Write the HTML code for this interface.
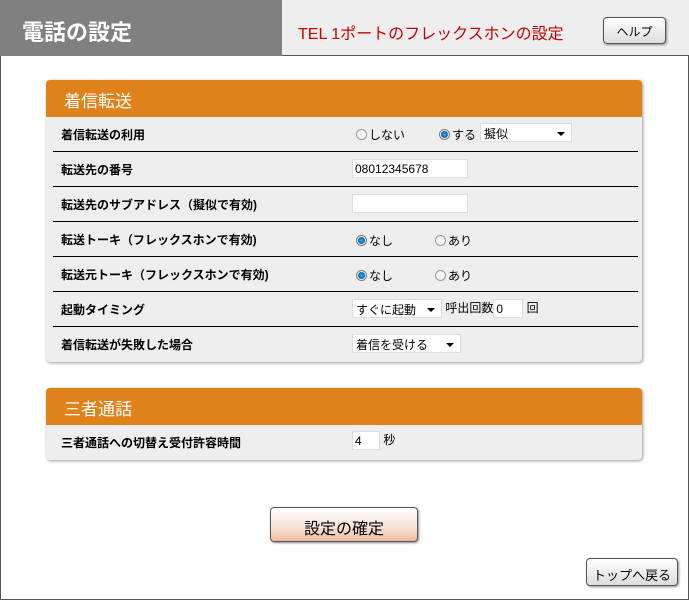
<!DOCTYPE html>
<html><head><meta charset="utf-8"><style>
*{margin:0;padding:0;box-sizing:border-box}
body{width:689px;height:601px;background:#fff;font-family:"Liberation Sans","Noto Sans CJK JP",sans-serif;position:relative;overflow:hidden;font-size:12px;color:#000}
.frame{position:absolute;left:0;top:0;width:689px;height:600px;border:1px solid #555;border-top:none}
.hd{position:absolute;left:0;top:0;width:689px;height:56px;background:#eeeeee;border-bottom:1px solid #555}
.hd .t{position:absolute;left:0;top:0;width:282px;height:56px;background:#808080;color:#fff;font-size:22px;font-weight:bold;padding:15px 0 0 22px}
.hd .s{position:absolute;left:298px;top:20px;color:#c00;font-size:16px}
.btn{position:absolute;border:1px solid #555;border-radius:4px;background:linear-gradient(#fff,#ddd);box-shadow:1px 1px 2px #888;text-align:center;color:#000}
.panel{position:absolute;left:46px;width:596px;background:#eeeeee;border-radius:4px;box-shadow:1px 1px 3px #999;overflow:hidden}
.ph{height:37px;background:#e0821a;color:#fff;font-size:17px;padding:7px 0 0 18px}
.row{position:relative;height:35px;margin:0 4px 0 7px;border-bottom:1px solid #000}
.row.last{border-bottom:none}
.lb{position:absolute;left:8px;top:9px;font-weight:bold;font-size:12px}
.ct{position:absolute;left:299px;top:8px;font-size:12px;white-space:nowrap}
.ab{position:absolute;white-space:nowrap;font-size:12px}
.rd{display:inline-block;width:11px;height:11px;border-radius:50%;border:1px solid #999;background:#f4f4f4;vertical-align:-1px;margin-right:2px}
.rd.on{background:radial-gradient(#4af 0,#06a 3px,#fff 4px);border-color:#777}
.in{display:inline-block;background:#fff;border:1px solid #ddd;height:19px;vertical-align:middle;font-size:12px;padding:2px 2px}
.sel{display:inline-block;background:#fff;border:1px solid #ddd;height:19px;vertical-align:middle;padding:1px 3px;position:relative}
.sel:after{content:"";position:absolute;right:6px;top:8px;border:4px solid transparent;border-top:4px solid #000}
</style></head><body>
<div class="frame"></div>
<div class="hd"><div class="t">電話の設定</div><div class="s">TEL 1ポートのフレックスホンの設定</div>
<div class="btn" style="left:603px;top:17px;width:63px;height:27px;padding-top:5px;font-size:12px">ヘルプ</div></div>

<div class="panel" style="top:80px;height:282px">
<div class="ph">着信転送</div>
<div class="row"><div class="lb">着信転送の利用</div>
<div class="ab" style="left:303px;top:9px"><span class="rd"></span>しない</div>
<div class="ab" style="left:386px;top:9px"><span class="rd on"></span>する</div>
<div class="ab" style="left:427px;top:6px"><span class="sel" style="width:92px">擬似</span></div></div>
<div class="row"><div class="lb">転送先の番号</div><div class="ct" style="top:7px"><span class="in" style="width:116px">08012345678</span></div></div>
<div class="row"><div class="lb">転送先のサブアドレス（擬似で有効)</div><div class="ct" style="top:7px"><span class="in" style="width:116px"></span></div></div>
<div class="row"><div class="lb">転送トーキ（フレックスホンで有効)</div><div class="ab" style="left:303px;top:10px"><span class="rd on"></span>なし</div><div class="ab" style="left:382px;top:10px"><span class="rd"></span>あり</div></div>
<div class="row"><div class="lb">転送元トーキ（フレックスホンで有効)</div><div class="ab" style="left:303px;top:10px"><span class="rd on"></span>なし</div><div class="ab" style="left:382px;top:10px"><span class="rd"></span>あり</div></div>
<div class="row"><div class="lb">起動タイミング</div><div class="ct" style="top:7px"><span class="sel" style="width:90px">すぐに起動</span> 呼出回数<span class="in" style="width:30px">0</span> 回</div></div>
<div class="row last"><div class="lb">着信転送が失敗した場合</div><div class="ct" style="top:7px"><span class="sel" style="width:109px">着信を受ける</span></div></div>
</div>

<div class="panel" style="top:388px;height:72px">
<div class="ph">三者通話</div>
<div class="row last"><div class="lb">三者通話への切替え受付許容時間</div><div class="ct" style="top:6px"><span class="in" style="width:28px">4</span> 秒</div></div>
</div>

<div class="btn" style="left:270px;top:507px;width:148px;height:35px;padding-top:7px;font-size:16px;background:linear-gradient(#fff,#f7e0d4 60%,#eebba0)">設定の確定</div>
<div class="btn" style="left:586px;top:558px;width:92px;height:28px;padding-top:6px;font-size:13px">トップへ戻る</div>
</body></html>
